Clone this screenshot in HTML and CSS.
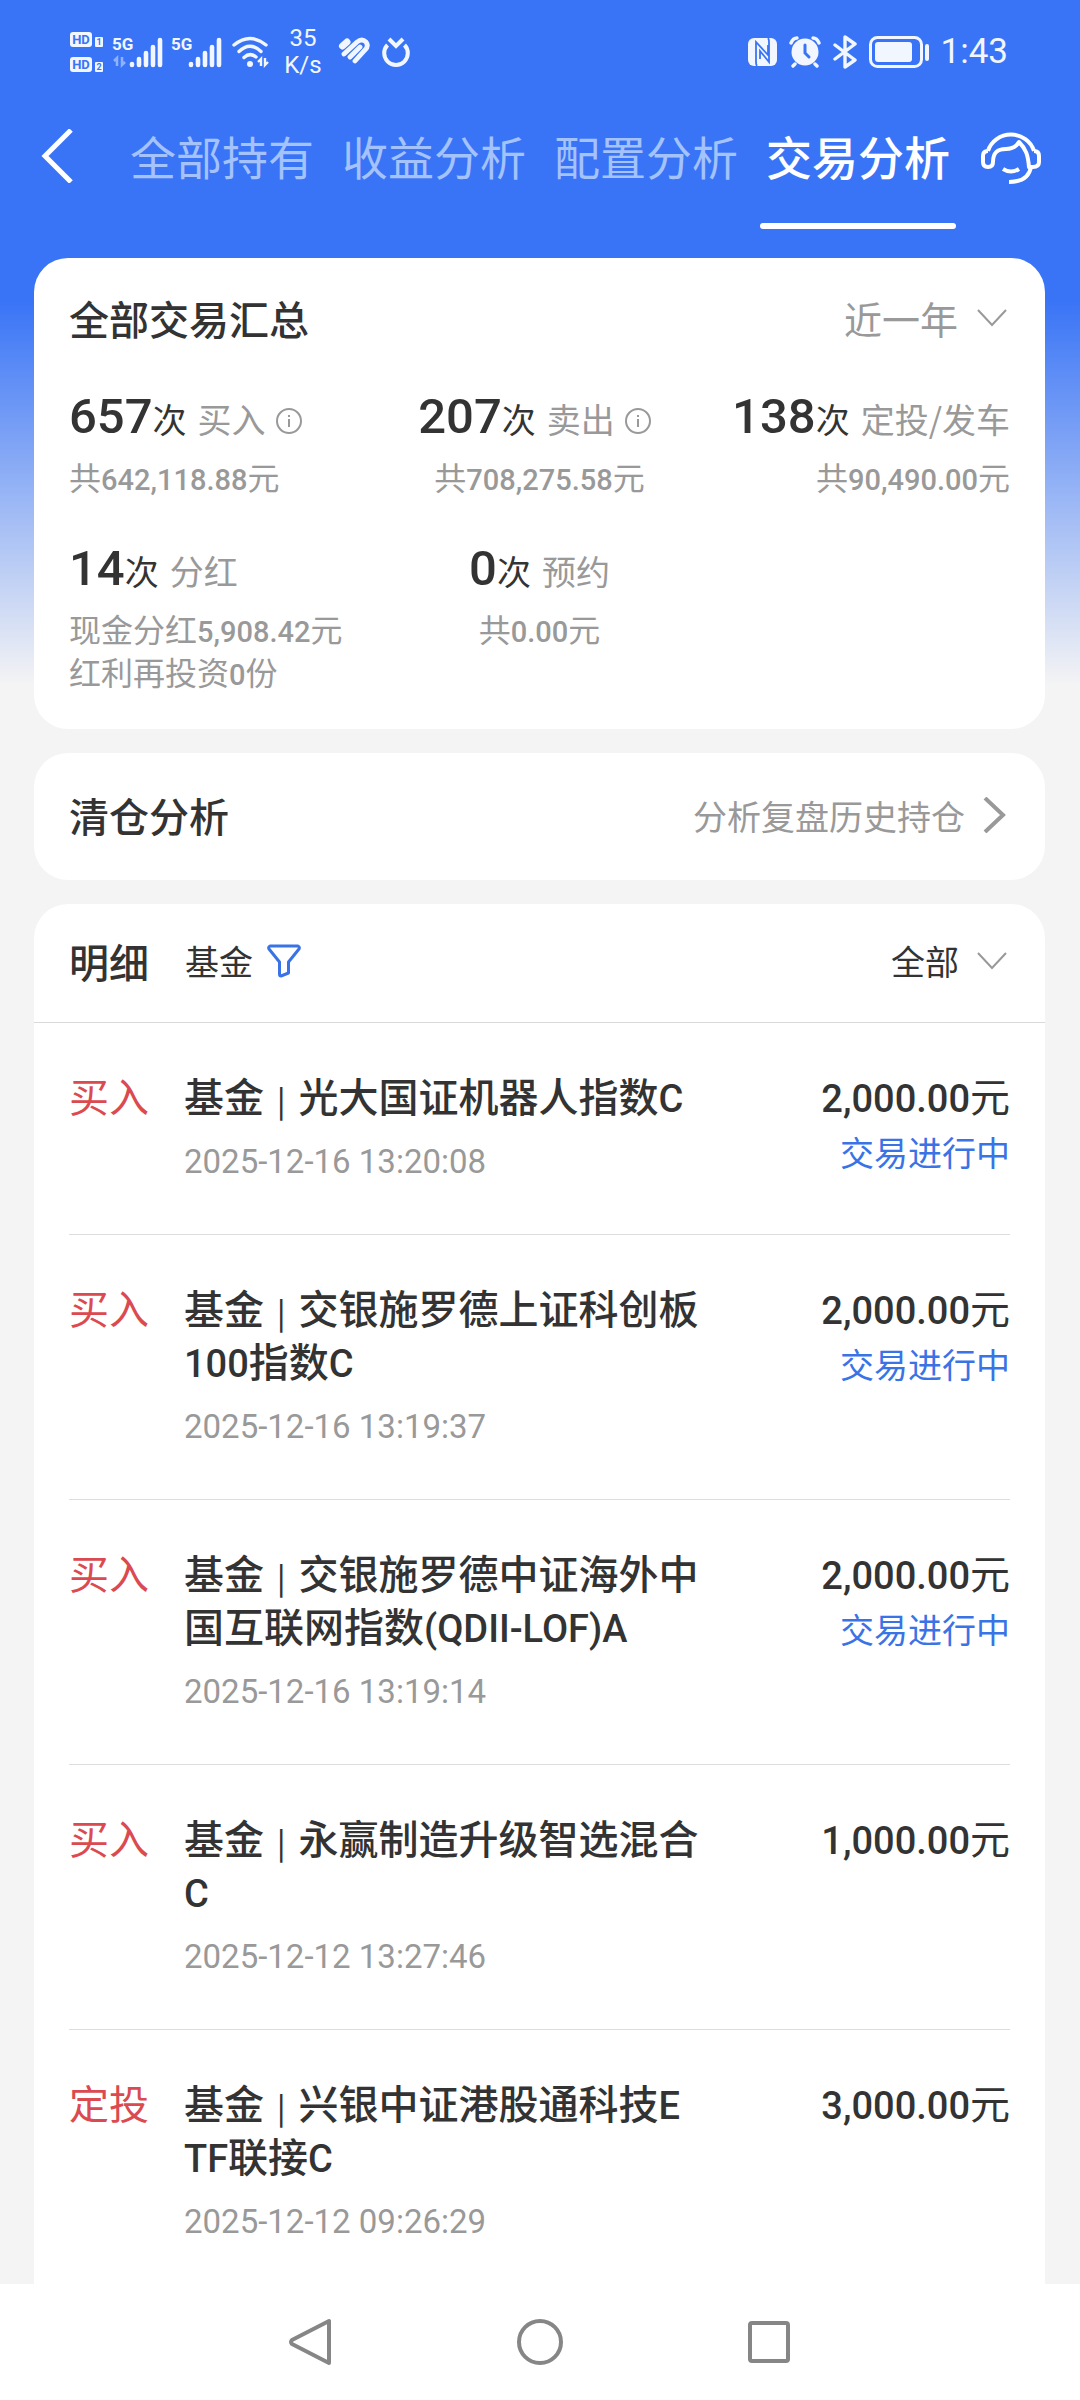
FILE: index.html
```html
<!DOCTYPE html>
<html lang="zh-CN">
<head>
<meta charset="utf-8">
<meta name="viewport" content="width=device-width, initial-scale=1">
<title>交易分析</title>
<link rel="stylesheet" href="styles.css">
</head>
<body>
<div class="app">
  <div class="status">
    <div class="status-group">
      <svg class="hd" width="34" height="42" viewBox="0 0 34 42" aria-hidden="true">
        <rect x="0" y="1" width="22" height="15" rx="3" fill="#f1f6ff"/>
        <rect x="0" y="26" width="22" height="15" rx="3" fill="#f1f6ff"/>
        <text x="11" y="13" text-anchor="middle" class="hd-text">HD</text>
        <text x="11" y="38" text-anchor="middle" class="hd-text">HD</text>
        <rect x="25" y="6" width="8" height="10" rx="1" fill="#f1f6ff"/>
        <rect x="25" y="31" width="8" height="10" rx="1" fill="#f1f6ff"/>
        <text x="29" y="14" text-anchor="middle" class="sim-text">1</text>
        <text x="29" y="39" text-anchor="middle" class="sim-text">2</text>
      </svg>
      <svg class="signal" width="51" height="34" viewBox="0 0 51 34" aria-hidden="true">
        <text x="0" y="15" class="net-text">5G</text>
        <path d="M5 31V23L2 26M10 22v8l3-3" stroke="#8fb2fb" stroke-width="2.5" fill="none"/>
        <path d="M20 29v1M27 24v6M34 18v12M41 12v18M48 5v25" stroke="#f1f6ff" stroke-width="4.6" stroke-linecap="round"/>
      </svg>
      <svg class="signal" width="51" height="34" viewBox="0 0 51 34" aria-hidden="true">
        <text x="0" y="15" class="net-text">5G</text>
        <path d="M20 29v1M27 24v6M34 18v12M41 12v18M48 5v25" stroke="#f1f6ff" stroke-width="4.6" stroke-linecap="round"/>
      </svg>
      <svg class="wifi" width="38" height="34" viewBox="0 0 38 34" fill="none" stroke="#f1f6ff" stroke-width="3.4" stroke-linecap="round" aria-hidden="true">
        <path d="M2 10Q18-3 34 10M7 16.500Q18 6 29 16.500M12 22.500Q18 17 24 22"/>
        <circle cx="18" cy="29" r="3" fill="#f1f6ff" stroke="none"/>
        <path d="M29 31v-7l-3 3M33 23v7l3-3" stroke-width="2.400" stroke-linecap="butt"/>
      </svg>
      <div class="speed"><span>35</span><span>K/s</span></div>
      <svg class="heart" width="32" height="30" viewBox="0 0 32 30" fill="none" stroke="#f1f6ff" stroke-linecap="round" aria-hidden="true">
        <path d="M4.500 9L9 5" stroke-width="7"/>
        <path d="M6 17L19 5Q24 1 28 5Q31 9 27 13L17 24M12 20L22 10" stroke-width="4.800"/>
      </svg>
      <svg class="ring" width="28" height="30" viewBox="0 0 28 30" fill="none" stroke="#f1f6ff" stroke-width="4" aria-hidden="true">
        <path d="M5.500 8A11.800 11.800 0 1 0 22.500 8M7 2L14 9L21 2"/>
      </svg>
    </div>
    <div class="status-group">
      <svg class="nfc" width="29" height="28" viewBox="0 0 29 28" aria-hidden="true">
        <rect width="29" height="28" rx="6" fill="#f1f6ff"/>
        <path d="M9 28Q8 27 8 24V4L20 17V7M20 0Q21 1 21 4V24L12 13V21" fill="none" stroke="#3974f6" stroke-width="1.800"/>
      </svg>
      <svg class="alarm" width="32" height="32" viewBox="0 0 32 32" fill="none" stroke="#f1f6ff" stroke-linecap="round" aria-hidden="true">
        <circle cx="16" cy="16" r="13.500" fill="#f1f6ff" stroke="none"/>
        <path d="M2 7Q4 2 8 2M30 7Q28 2 24 2M6 28l-2 2M26 28l2 2" stroke-width="3.400"/>
        <path d="M16 9v8l4 4" stroke="#3974f6" stroke-width="3"/>
      </svg>
      <svg class="bt" width="24" height="34" viewBox="0 0 24 34" fill="none" stroke="#f1f6ff" stroke-width="3.400" stroke-linecap="round" stroke-linejoin="round" aria-hidden="true">
        <path d="M2 10L22 25L12 32V2L22 9L2 24"/>
      </svg>
      <svg class="battery" width="60" height="34" viewBox="0 0 60 34" aria-hidden="true">
        <rect x="1.500" y="2.500" width="51" height="29" rx="7" fill="none" stroke="#f1f6ff" stroke-width="3"/>
        <rect x="6" y="7" width="37" height="20" rx="3" fill="#f1f6ff"/>
        <rect x="56" y="9" width="4" height="17" rx="2" fill="#f1f6ff"/>
      </svg>
      <time class="clock">1:43</time>
    </div>
  </div>

  <header class="topbar">
    <button class="icon-btn" type="button" aria-label="返回">
      <svg width="33" height="54" viewBox="0 0 33 54" fill="none" stroke="#fff" stroke-width="5"><path d="M30 1L4 27L30 53"/></svg>
    </button>
    <nav class="tabs">
      <a class="tab" href="#all">全部持有</a>
      <a class="tab" href="#profit">收益分析</a>
      <a class="tab" href="#allocation">配置分析</a>
      <a class="tab tab-active" href="#trade" aria-current="page">交易分析</a>
    </nav>
    <button class="icon-btn" type="button" aria-label="客服">
      <svg width="60" height="58" viewBox="0 0 60 58" fill="none" stroke="#fff" stroke-width="4" stroke-linejoin="round">
        <path d="M7 24A24 23 0 0 1 53 24"/>
        <path d="M7 24Q2 24 2 29V35Q2 40 7 40Q12 40 12 35C12 25 17 22 25 22Q34 22 38 15C45 22 47 28 48 40H52Q58 40 58 35V29Q58 24 53 24"/>
        <path d="M50 40C48 51 40 55 28 55M22 42Q30 47 38 42"/>
      </svg>
    </button>
  </header>

  <main class="content">
    <section class="card summary">
      <div class="card-head">
        <h2 class="title">全部交易汇总</h2>
        <label class="picker picker-muted">
          <select aria-label="时间范围"><option>近一年</option></select>
          <svg width="30" height="18" viewBox="0 0 30 18" fill="none" stroke="#999" stroke-width="2"><path d="M1 1L15 16L29 1"/></svg>
        </label>
      </div>
      <div class="stats">
        <div class="stat">
          <p class="count"><b>657</b>次<span class="kind">买入</span><svg class="info" width="26" height="26" viewBox="0 0 26 26" fill="none" stroke="#999" stroke-width="2"><circle cx="13" cy="13" r="12"/><path d="M13 11v8M13 7v2"/></svg></p>
          <p class="sum">共<span class="num">642,118.88</span>元</p>
        </div>
        <div class="stat stat-center">
          <p class="count"><b>207</b>次<span class="kind">卖出</span><svg class="info" width="26" height="26" viewBox="0 0 26 26" fill="none" stroke="#999" stroke-width="2"><circle cx="13" cy="13" r="12"/><path d="M13 11v8M13 7v2"/></svg></p>
          <p class="sum">共<span class="num">708,275.58</span>元</p>
        </div>
        <div class="stat stat-right">
          <p class="count"><b>138</b>次<span class="kind">定投/发车</span></p>
          <p class="sum">共<span class="num">90,490.00</span>元</p>
        </div>
        <div class="stat">
          <p class="count"><b>14</b>次<span class="kind">分红</span></p>
          <p class="sum">现金分红<span class="num">5,908.42</span>元</p>
          <p class="sum">红利再投资<span class="num">0</span>份</p>
        </div>
        <div class="stat stat-center">
          <p class="count"><b>0</b>次<span class="kind">预约</span></p>
          <p class="sum">共<span class="num">0.00</span>元</p>
        </div>
      </div>
    </section>

    <a class="card link-card" href="#closed">
      <span class="title">清仓分析</span>
      <span class="more">分析复盘历史持仓
        <svg width="23" height="36" viewBox="0 0 23 36" fill="none" stroke="#999" stroke-width="4"><path d="M2 1L20 18L2 35"/></svg>
      </span>
    </a>

    <section class="card details">
      <div class="details-head">
        <h2 class="title">明细</h2>
        <button class="filter" type="button">基金
          <svg width="34" height="34" viewBox="0 0 34 34" fill="none" stroke="#3a73e6" stroke-width="3" stroke-linejoin="round"><path d="M3 2H31Q33 3 32 5L21.500 18V29L14 32Q12.500 32 12.500 30V18L2 5Q1 3 3 2Z"/></svg>
        </button>
        <label class="picker picker-small">
          <select aria-label="交易类型"><option>全部</option></select>
          <svg width="30" height="18" viewBox="0 0 30 18" fill="none" stroke="#999" stroke-width="2"><path d="M1 1L15 16L29 1"/></svg>
        </label>
      </div>
      <ul class="trades">
        <li class="trade">
          <span class="side">买入</span>
          <div class="trade-main"><h3 class="name">基金 <i class="sep">|</i> 光大国证机器人指数<span class="latin">C</span></h3><time class="date">2025-12-16 13:20:08</time></div>
          <div class="trade-end"><p class="amount"><span class="latin">2,000.00</span>元</p><p class="state">交易进行中</p></div>
        </li>
        <li class="trade">
          <span class="side">买入</span>
          <div class="trade-main"><h3 class="name">基金 <i class="sep">|</i> 交银施罗德上证科创板<span class="latin">100</span>指数<span class="latin">C</span></h3><time class="date">2025-12-16 13:19:37</time></div>
          <div class="trade-end"><p class="amount"><span class="latin">2,000.00</span>元</p><p class="state">交易进行中</p></div>
        </li>
        <li class="trade">
          <span class="side">买入</span>
          <div class="trade-main"><h3 class="name">基金 <i class="sep">|</i> 交银施罗德中证海外中国互联网指数<span class="latin">(QDII-LOF)A</span></h3><time class="date">2025-12-16 13:19:14</time></div>
          <div class="trade-end"><p class="amount"><span class="latin">2,000.00</span>元</p><p class="state">交易进行中</p></div>
        </li>
        <li class="trade">
          <span class="side">买入</span>
          <div class="trade-main"><h3 class="name">基金 <i class="sep">|</i> 永赢制造升级智选混合<span class="latin">C</span></h3><time class="date">2025-12-12 13:27:46</time></div>
          <div class="trade-end"><p class="amount"><span class="latin">1,000.00</span>元</p></div>
        </li>
        <li class="trade">
          <span class="side">定投</span>
          <div class="trade-main"><h3 class="name">基金 <i class="sep">|</i> 兴银中证港股通科技<span class="latin">ETF</span>联接<span class="latin">C</span></h3><time class="date">2025-12-12 09:26:29</time></div>
          <div class="trade-end"><p class="amount"><span class="latin">3,000.00</span>元</p></div>
        </li>
      </ul>
    </section>
  </main>

  <nav class="sysbar">
    <button class="sys-btn" type="button" aria-label="返回"><svg width="48" height="48" viewBox="0 0 48 48" fill="none" stroke="#868686" stroke-width="4" stroke-linejoin="round"><path d="M42 3V45L5 26Q3 24 5 22Z"/></svg></button>
    <button class="sys-btn" type="button" aria-label="主页"><svg width="48" height="48" viewBox="0 0 48 48" fill="none" stroke="#868686" stroke-width="4"><circle cx="24" cy="24" r="21"/></svg></button>
    <button class="sys-btn" type="button" aria-label="最近任务"><svg width="48" height="48" viewBox="0 0 48 48" fill="none" stroke="#868686" stroke-width="4"><rect x="5" y="5" width="38" height="38" rx="2"/></svg></button>
  </nav>
</div>
</body>
</html>
```
FILE: styles.css
```css
* { box-sizing: border-box; }

body, h2, h3, p, ul { margin: 0; padding: 0; }

body {
  font-family: "Noto Sans CJK SC", sans-serif;
  color: #333;
}

a { color: inherit; text-decoration: none; }

button, select {
  appearance: none;
  border: 0;
  padding: 0;
  background: none;
  font: inherit;
  color: inherit;
}

svg { display: block; flex: none; }

.app {
  display: flex;
  flex-direction: column;
  height: 100vh;
  background: linear-gradient(#3974f6 300px, #f4f4f4 685px);
}

/* status bar */
.status {
  display: flex;
  flex: none;
  justify-content: space-between;
  align-items: center;
  height: 104px;
  padding: 0 72px 0 70px;
  font-family: Roboto, sans-serif;
  color: #f1f6ff;
}

.status-group { display: flex; align-items: center; gap: 8px; }
.hd-text { font: 700 13px Roboto, sans-serif; fill: #3974f6; }
.sim-text { font: 700 9px Roboto, sans-serif; fill: #3974f6; }
.net-text { font: 700 17px "Liberation Sans Narrow", Roboto, sans-serif; fill: #f1f6ff; }

.wifi { margin-left: 2px; }

.speed {
  display: flex;
  flex-direction: column;
  align-items: center;
  width: 42px;
  margin: 0 6px 0 4px;
  font-size: 24px;
  line-height: 27px;
}

.ring, .alarm, .bt, .battery, .clock { margin-left: 4px; }
.clock { font-size: 35px; line-height: 40px; }

/* top navigation */
.topbar {
  display: flex;
  flex: none;
  justify-content: space-between;
  padding: 20px 39px 29px 41px;
}

.icon-btn { display: flex; align-items: center; height: 64px; }

.tabs { display: flex; gap: 16px; margin-left: 25px; }

.tab {
  padding: 0 6px;
  font-size: 46px;
  line-height: 62px;
  color: #a4c2fb;
}

.tab::after {
  content: "";
  display: block;
  height: 6px;
  margin: 37px -6px 0;
  border-radius: 3px;
}

.tab-active { color: #fff; font-weight: 500; }
.tab-active::after { background: #fff; }

/* cards */
.content {
  display: flex;
  flex: 1;
  flex-direction: column;
  gap: 24px;
  min-height: 0;
  padding: 0 35px 0 34px;
  overflow-y: auto;
  scrollbar-width: none;
}

.card {
  flex: none;
  padding: 0 35px;
  border-radius: 34px;
  background: #fff;
}

.title { font-size: 40px; line-height: 54px; font-weight: 500; }

.card-head, .link-card {
  display: flex;
  justify-content: space-between;
  align-items: center;
}

.picker {
  display: flex;
  align-items: center;
  gap: 18px;
  margin-right: 3px;
  font-size: 38px;
  line-height: 54px;
}

.picker-muted { color: #999; }
.picker-small { margin-left: auto; font-size: 34px; }

/* summary */
.summary { padding-top: 33px; padding-bottom: 36px; }

.stats {
  display: grid;
  grid-template-columns: 1fr 1fr 1fr;
  row-gap: 43px;
  margin-top: 44px;
}

.stat-center { display: flex; flex-direction: column; align-items: center; }
.stat-right { display: flex; flex-direction: column; align-items: flex-end; }

.count {
  display: flex;
  align-items: baseline;
  height: 56px;
  margin-bottom: 10px;
  font-size: 34px;
  line-height: 56px;
  white-space: nowrap;
}

.count b { font-size: 49px; font-weight: 500; font-family: Roboto, sans-serif; }
.kind { margin-left: 11px; color: #999; }
.info { align-self: center; margin: 8px 10px 0; }
.sum { font-size: 32px; line-height: 43px; color: #999; }
.sum .num { font-family: Roboto, sans-serif; font-size: 29px; line-height: 1; font-weight: 500; }

/* closed positions */
.link-card { height: 127px; padding-bottom: 3px; }

.more {
  display: flex;
  align-items: center;
  gap: 18px;
  margin-right: 4px;
  font-size: 34px;
  color: #999;
}

/* details */
.details { padding: 0 0 34px; }

.details-head {
  display: flex;
  align-items: center;
  height: 119px;
  padding: 0 35px 4px;
  border-bottom: 1px solid #d9d9d9;
}

.filter {
  display: flex;
  align-items: center;
  gap: 14px;
  margin-left: 36px;
  font-size: 34px;
  line-height: 54px;
}

.trades { padding: 0 35px; list-style: none; }

.trade {
  display: grid;
  grid-template-columns: 115px 1fr 310px;
  padding: 46px 0 51px;
  border-bottom: 1px solid #ddd;
  font-size: 40px;
  line-height: 53px;
}

.trade:last-child { border-bottom: 0; }

.side { color: #db4a50; }
.name { font-size: 40px; font-weight: 500; word-break: break-all; }
.latin { font-family: Roboto, sans-serif; font-size: 38px; line-height: 1; font-weight: 500; }
.sep { margin: 0 4px; font-style: normal; font-size: 30px; line-height: 1; }

.date {
  display: block;
  margin-top: 18px;
  font-family: Roboto, sans-serif;
  font-size: 33px;
  line-height: 43px;
  color: #999;
}

.trade-end { text-align: right; }
.state { margin-top: 6px; font-size: 34px; line-height: 48px; color: #3a73e6; }

/* system navigation */
.sysbar {
  display: flex;
  flex: none;
  justify-content: center;
  align-items: center;
  gap: 181px;
  height: 116px;
  background: #fff;
}
```
